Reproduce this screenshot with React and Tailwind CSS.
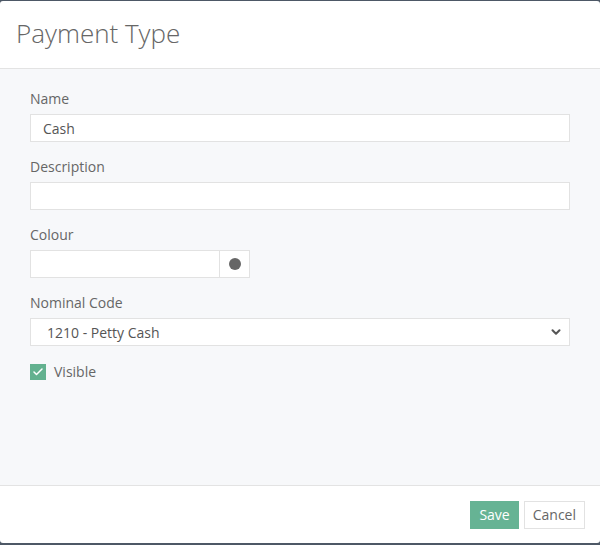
import { Check, ChevronDown } from 'lucide-react';

function Field({ label, children }) {
  return (
    <div className="mb-[15px]">
      <label className="block h-5 leading-5 mb-[5px] text-[14px] text-[#666]">{label}</label>
      {children}
    </div>
  );
}

export default function App() {
  return (
    <div className="h-[545px] w-[600px] bg-[#4d5866] pt-px pb-[2px] font-['Open_Sans',sans-serif]">
      <div className="h-full flex flex-col bg-white rounded-[3px] overflow-hidden">
        {/* Header */}
        <div className="h-[68px] flex items-center px-4 border-b border-[#e3e3e3]">
          <h1 className="text-[26px] font-light text-[#666] leading-none -mt-1">Payment Type</h1>
        </div>

        {/* Body */}
        <div className="flex-1 bg-[#f7f8fa] px-[30px] pt-[20px]">
          <Field label="Name">
            <div className="h-7 bg-white border border-[#e2e2e2] flex items-center px-3 text-[14px] text-[#555]">Cash</div>
          </Field>
          <Field label="Description">
            <div className="h-7 bg-white border border-[#e2e2e2]" />
          </Field>
          <Field label="Colour">
            <div className="flex h-7 w-[220px]">
              <div className="w-[190px] bg-white border border-[#e2e2e2]" />
              <div className="w-[30px] bg-white border border-l-0 border-[#e2e2e2] flex items-center justify-center">
                <span className="w-3 h-3 rounded-full bg-[#666]" />
              </div>
            </div>
          </Field>
          <Field label="Nominal Code">
            <div className="h-7 bg-white border border-[#e2e2e2] flex items-center justify-between pl-4 pr-[6px] text-[14px] text-[#555]">
              <span>1210 - Petty Cash</span>
              <ChevronDown className="w-3.5 h-3.5 text-[#555]" strokeWidth={3.5} />
            </div>
          </Field>
          <div className="flex items-center gap-2 mt-[4px]">
            <span className="w-4 h-4 bg-[#63b18f] flex items-center justify-center">
              <Check className="w-3 h-3 text-white" strokeWidth={3} />
            </span>
            <span className="text-[14px] text-[#666]">Visible</span>
          </div>
        </div>

        {/* Footer */}
        <div className="h-[58px] border-t border-[#e3e3e3] flex items-center justify-end gap-[5px] pr-[15px]">
          <button className="h-7 px-[9px] bg-[#66b394] text-white text-[14px]">Save</button>
          <button className="h-7 px-[8px] bg-white border border-[#e2e2e2] text-[#666] text-[14px]">Cancel</button>
        </div>
      </div>
    </div>
  );
}
